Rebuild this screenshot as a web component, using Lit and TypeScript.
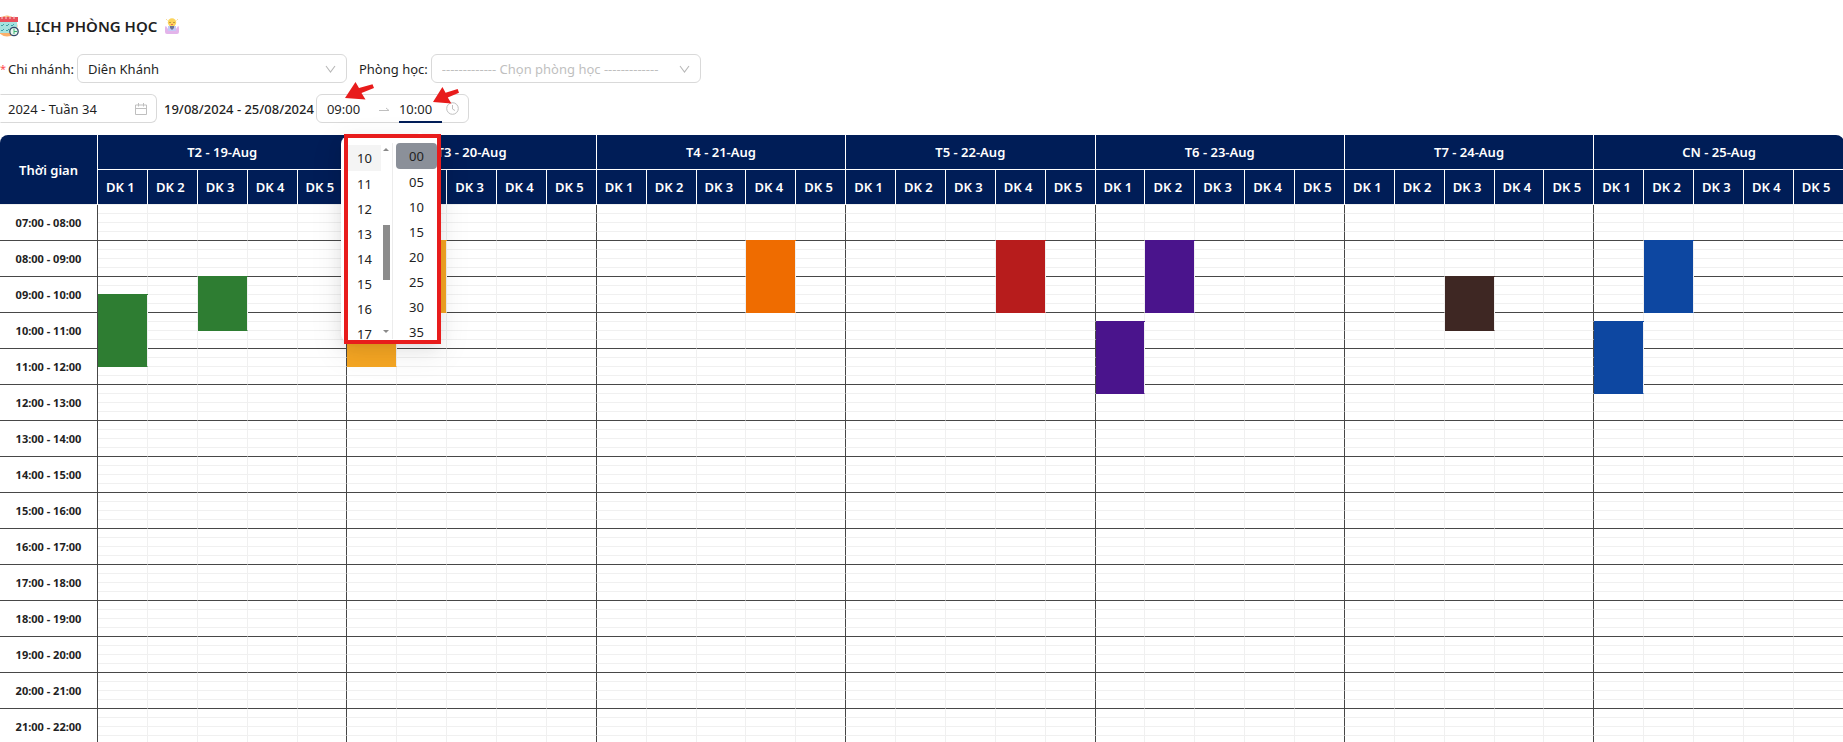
import { LitElement, html, css, svg, nothing } from "lit";
import { customElement, state } from "lit/decorators.js";

interface Booking {
  day: number;
  room: number;
  start: number;
  slots: number;
  color: string;
}

const DAYS = ["T2 - 19-Aug", "T3 - 20-Aug", "T4 - 21-Aug", "T5 - 22-Aug", "T6 - 23-Aug", "T7 - 24-Aug", "CN - 25-Aug"];
const ROOMS = ["DK 1", "DK 2", "DK 3", "DK 4", "DK 5"];
const FIRST_HOUR = 7;
const HOURS = 15;

// start: quarter hours counted from 07:00
const BOOKINGS: Booking[] = [
  { day: 0, room: 0, start: 10, slots: 8, color: "green" },
  { day: 0, room: 2, start: 8, slots: 6, color: "green" },
  { day: 1, room: 0, start: 10, slots: 8, color: "amber" },
  { day: 1, room: 1, start: 4, slots: 8, color: "amber" },
  { day: 2, room: 3, start: 4, slots: 8, color: "orange" },
  { day: 3, room: 3, start: 4, slots: 8, color: "red" },
  { day: 4, room: 0, start: 13, slots: 8, color: "purple" },
  { day: 4, room: 1, start: 4, slots: 8, color: "purple" },
  { day: 5, room: 2, start: 8, slots: 6, color: "brown" },
  { day: 6, room: 0, start: 13, slots: 8, color: "blue" },
  { day: 6, room: 1, start: 4, slots: 8, color: "blue" },
];

const pad = (n: number) => String(n).padStart(2, "0");

const chevron = svg`<path d="M1 2 L5.5 8 L10 2" fill="none" stroke="#b8b8b8" stroke-width="1.1"/>`;

@customElement("time-panel")
export class TimePanel extends LitElement {
  static styles = css`
    :host { display: block; }
    .beak {
      position: absolute;
      top: -3px;
      left: 75px;
      width: 8px;
      height: 8px;
      background: #fff;
      border-radius: 2px 0 0 0;
      transform: rotate(45deg);
    }
    .panel {
      display: flex;
      box-sizing: border-box;
      width: 99px;
      height: 206px;
      padding: 7px 3px 3px 7px;
      background: #fff;
      border-radius: 8px;
      box-shadow: 0 6px 16px rgba(0, 0, 0, 0.08), 0 3px 6px -4px rgba(0, 0, 0, 0.12), 0 9px 28px 8px rgba(0, 0, 0, 0.05);
      overflow: hidden;
    }
    .column { display: flex; flex-direction: column; overflow: hidden; }
    .hours { width: 33px; padding-top: 2px; }
    .minutes { flex: 1; border-left: 1px solid #ececec; padding-left: 3px; }
    .cell {
      flex: none;
      height: 25px;
      padding: 0;
      border: 0;
      background: none;
      font: inherit;
      color: #222;
      text-align: center;
    }
    .cell:first-child { height: 26px; }
    .hours .cell:first-child { background: #f4f4f4; }
    .minutes .cell:first-child { background: #8b9099; border-radius: 4px; }
    .bar { display: flex; flex-direction: column; align-items: center; width: 11px; padding: 5px 0 6px; }
    .up, .down { border: 3px solid transparent; }
    .up { border-top: 0; border-bottom-color: #8a8a8a; }
    .down { border-bottom: 0; border-top-color: #8a8a8a; margin-top: auto; }
    .thumb { width: 7px; height: 55px; margin-top: 74px; background: #8c8c8c; }
  `;

  render() {
    return html`<div class="beak"></div>
      <div class="panel">
        <div class="column hours">
          ${[10, 11, 12, 13, 14, 15, 16, 17].map((h) => html`<button class="cell">${h}</button>`)}
        </div>
        <div class="bar"><span class="up"></span><span class="thumb"></span><span class="down"></span></div>
        <div class="column minutes">
          ${[0, 5, 10, 15, 20, 25, 30, 35].map((m) => html`<button class="cell">${pad(m)}</button>`)}
        </div>
      </div>`;
  }
}

@customElement("room-schedule")
export class RoomSchedule extends LitElement {
  static styles = css`
    :host { display: block; }
    .grid {
      width: 100%;
      table-layout: fixed;
      border-collapse: separate;
      border-spacing: 0;
      border-radius: 8px 8px 0 0;
      overflow: hidden;
    }
    .time-col { width: 98px; }
    th, td { box-sizing: border-box; padding: 0; }
    thead th {
      height: 35px;
      background: #001d57;
      color: #fff;
      font-size: 13px;
      font-weight: 600;
      line-height: 20px;
      border-right: 1px solid #fff;
      border-bottom: 1px solid #fff;
    }
    thead .room { padding-left: 8px; text-align: left; }
    thead .edge, tbody .edge { border-right: 0; }
    thead .room, thead .corner { border-bottom-color: #f0f0f0; }
    tbody tr { height: 9px; }
    tbody td, tbody th { height: 9px; border-right: 1px solid #f0f0f0; border-bottom: 1px solid #f0f0f0; }
    tbody .hour {
      font-size: 11px;
      font-weight: 700;
      line-height: 16px;
      color: #222;
      border-right-color: #474747;
      border-bottom-color: #474747;
    }
    tbody .day-end { border-right-color: #474747; }
    tbody .hour-end { border-bottom-color: #474747; }
    tbody .booking { background: var(--tone); border-bottom-color: var(--tone); box-shadow: 0 -1px 0 var(--tone); }
    .green { --tone: #2e7d32; }
    .amber { --tone: #f5a623; }
    .orange { --tone: #ef6c00; }
    .red { --tone: #b71c1c; }
    .purple { --tone: #4a148c; }
    .brown { --tone: #3e2723; }
    .blue { --tone: #0d47a1; }
  `;

  private cell(day: number, room: number, slot: number) {
    const hit = BOOKINGS.find((b) => b.day === day && b.room === room && slot >= b.start && slot < b.start + b.slots);
    const lastRoom = room === ROOMS.length - 1;
    const side = lastRoom ? (day === DAYS.length - 1 ? "edge" : "day-end") : "";
    if (hit) {
      return hit.start === slot
        ? html`<td class="booking ${hit.color} ${side}" rowspan=${hit.slots}></td>`
        : nothing;
    }
    return html`<td class="${side} ${slot % 4 === 3 ? "hour-end" : ""}"></td>`;
  }

  render() {
    const slots = Array.from({ length: HOURS * 4 }, (_, i) => i);
    const lastDay = DAYS.length - 1;
    return html`<table class="grid">
      <colgroup><col class="time-col" />${DAYS.map(() => ROOMS.map(() => html`<col />`))}</colgroup>
      <thead>
        <tr>
          <th class="corner" rowspan="2">Thời gian</th>
          ${DAYS.map((d, i) => html`<th class=${i === lastDay ? "edge" : ""} colspan="5">${d}</th>`)}
        </tr>
        <tr>
          ${DAYS.map((_, i) => ROOMS.map((r, j) => html`<th class="room ${i === lastDay && j === 4 ? "edge" : ""}">${r}</th>`))}
        </tr>
      </thead>
      <tbody>
        ${slots.map((s) => {
          const h = FIRST_HOUR + s / 4;
          return html`<tr>
            ${s % 4 === 0 ? html`<th class="hour" rowspan="4">${pad(h)}:00 - ${pad(h + 1)}:00</th>` : nothing}
            ${DAYS.map((_, d) => ROOMS.map((_r, r) => this.cell(d, r, s)))}
          </tr>`;
        })}
      </tbody>
    </table>`;
  }
}

@customElement("app-root")
export class AppRoot extends LitElement {
  @state() private from = "09:00";
  @state() private to = "10:00";

  static styles = css`
    :host {
      display: block;
      height: 100vh;
      overflow: hidden;
      background: #fff;
      color: #1f1f1f;
      font-family: "Noto Sans", "Open Sans", sans-serif;
      font-size: 13px;
      line-height: 20px;
    }
    .title { display: flex; align-items: center; gap: 8px; margin: 0; padding: 12px 0 14px; font-size: 15px; font-weight: 600; line-height: 28px; }
    .calendar { width: 19px; height: 24px; }
    .mascot { width: 14px; height: 18px; }
    .row { display: flex; align-items: center; }
    .filters { margin-bottom: 11px; }
    .star { color: #ff4d4f; font-size: 11px; margin-right: 2px; }
    .label { margin-right: 3px; }
    .second { margin-left: 12px; }
    .field {
      display: flex;
      align-items: center;
      box-sizing: border-box;
      height: 29px;
      border: 1px solid #d9d9d9;
      border-radius: 6px;
      background: #fff;
    }
    .select { width: 270px; padding-right: 10px; }
    .select select {
      flex: 1;
      min-width: 0;
      height: 27px;
      padding: 0 0 0 10px;
      border: 0;
      outline: 0;
      appearance: none;
      background: none;
      font: inherit;
      color: inherit;
    }
    .select .empty { color: #bfbfbf; }
    .arrow { flex: none; width: 11px; height: 10px; }
    .week { width: 157px; padding-right: 9px; border-left-color: transparent; border-radius: 0 6px 6px 0; }
    input { min-width: 0; padding: 0; border: 0; outline: 0; background: none; font: inherit; color: inherit; }
    .week input { flex: 1; padding-left: 7px; }
    .range { margin: 0 2px 0 7px; font-weight: 500; }
    .times { position: relative; width: 153px; padding: 0 9px 0 10px; }
    .times input { width: 43px; height: 27px; }
    .to-arrow { width: 12px; height: 10px; margin: 0 9px 0 8px; }
    .times .active { box-shadow: inset 0 -1px 0 #001d57, 0 1px 0 #001d57; }
    .clock { width: 13px; height: 13px; margin-left: auto; }
    .panel { position: absolute; z-index: 1; top: 41px; left: 24px; }
    .highlight { position: absolute; z-index: 2; top: 39px; left: 27px; box-sizing: border-box; width: 97px; height: 210px; border: 4px solid #e81c1c; pointer-events: none; }
    .pointer { position: absolute; z-index: 3; }
    .first { top: -13px; left: 28px; width: 29px; height: 18px; }
    .last { top: -8px; left: 116px; width: 26px; height: 17px; }
    .schedule { margin: 12px -1px 0 0; }
  `;

  private pointer(cls: string) {
    return html`<svg class="pointer ${cls}" viewBox="0 0 29 18" preserveAspectRatio="none" aria-hidden="true">
      <path d="M0 16 L10.5 0 L14 6 L27.500 2.200 L29 6 L16.500 11 L20.500 17.500 Z" fill="#e81c1c" />
    </svg>`;
  }

  render() {
    return html`
      <h1 class="title">
        <svg class="calendar" viewBox="0 0 19 24" aria-hidden="true">
          <circle cx="7" cy="12" r="10.500" fill="#fbb06a" />
          <path d="M0 5 H17 V19 H0 Z" fill="#a5e3e0" />
          <path d="M0 3 H18 V8 H0 Z" fill="#e8505b" />
          <path d="M2 2 V5 M6 2 V5 M10 2 V5 M14 2 V5" stroke="#f8d5d5" />
          <path d="M1 11 l1 1 2 -2 M6 11 l1 1 2 -2 M11 11 l1 1 2 -2 M1 16 l1 1 2 -2 M6 16 l1 1 2 -2" fill="none" stroke="#3f9fa5" />
          <circle cx="14" cy="17.500" r="4.200" fill="#e7f7ee" stroke="#34496a" stroke-width="1.300" />
          <path d="M14 14.500 V17.500 H17 M14 17.500 V20" fill="none" stroke="#3bb273" />
        </svg>
        <span>LỊCH PHÒNG HỌC</span>
        <svg class="mascot" viewBox="0 0 14 18" aria-hidden="true">
          <path d="M1 9 Q0 9 0 11 V15 Q0 17 2 17 H12 Q14 17 14 15 V11 Q14 9 13 9 L11 12 H3 Z" fill="#e3b4ea" />
          <path d="M3 9 H11 V14 H3 Z" fill="#c3c9f5" />
          <path d="M1 2 L2.500 3.500 M13 2 L11.500 3.500" stroke="#f7dc9a" />
          <circle cx="7" cy="5.500" r="4.200" fill="#fbd45c" />
          <path d="M5 9 H9 V11 L7 13 L5 11 Z" fill="#6b7395" />
          <path d="M5 5 V6 M9 5 V6" stroke="#8a5a2b" />
          <path d="M6 7.500 H8" stroke="#e8705b" />
        </svg>
      </h1>
      <div class="row filters">
        <span class="star">*</span><label class="label" for="branch">Chi nhánh:</label>
        <div class="field select">
          <select id="branch"><option>Diên Khánh</option></select>
          <svg class="arrow" viewBox="0 0 11 10">${chevron}</svg>
        </div>
        <label class="label second" for="room">Phòng học:</label>
        <div class="field select">
          <select id="room" class="empty"><option>------------- Chọn phòng học -------------</option></select>
          <svg class="arrow" viewBox="0 0 11 10">${chevron}</svg>
        </div>
      </div>
      <div class="row">
        <div class="field week">
          <input aria-label="Tuần" .value=${"2024 - Tuần 34"} />
          <svg width="12" height="12" viewBox="0 0 12 12" fill="none" stroke="#bfbfbf"><path d="M.5 2 H11.5 V11.5 H.5 Z M.5 5.5 H11.5 M3.5 0 V3.5 M8.5 0 V3.5" /></svg>
        </div>
        <span class="range">19/08/2024 - 25/08/2024</span>
        <div class="field times">
          <input aria-label="Từ" .value=${this.from} />
          <svg class="to-arrow" viewBox="0 0 12 10"><path d="M1 6.5 H11 L8 4" fill="none" stroke="#bfbfbf" /></svg>
          <input class="active" aria-label="Đến" .value=${this.to} />
          <svg class="clock" viewBox="0 0 13 13" fill="none" stroke="#bfbfbf"><circle cx="6.5" cy="6.5" r="5.8" /><path d="M6.5 3 V7 L9 8.5" /></svg>
          <time-panel class="panel"></time-panel>
          <div class="highlight"></div>
          ${this.pointer("first")}${this.pointer("last")}
        </div>
      </div>
      <room-schedule class="schedule"></room-schedule>
    `;
  }
}
